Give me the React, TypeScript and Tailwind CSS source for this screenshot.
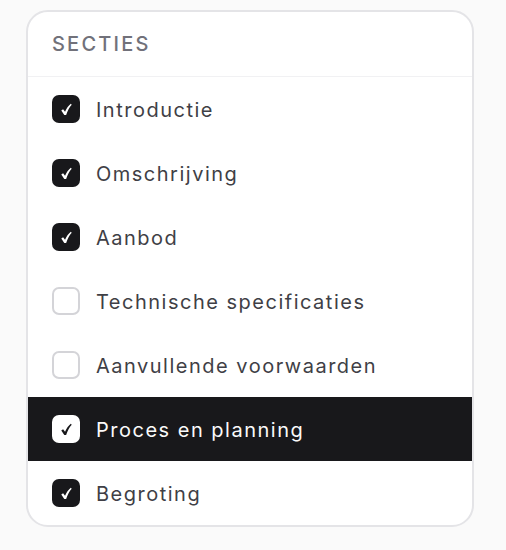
import React from "react";

const items: { label: string; checked: boolean; active?: boolean }[] = [
  { label: "Introductie", checked: true },
  { label: "Omschrijving", checked: true },
  { label: "Aanbod", checked: true },
  { label: "Technische specificaties", checked: false },
  { label: "Aanvullende voorwaarden", checked: false },
  { label: "Proces en planning", checked: true, active: true },
  { label: "Begroting", checked: true },
];

function Check() {
  return (
    <svg width="11" height="13" viewBox="0 0 12 13" fill="currentColor" aria-hidden>
      <path d="M0.3 7.6 L2.3 6.2 L4.4 9.0 C5.9 5.6 7.9 2.6 10.7 0.3 L11.7 1.3 C9.1 4.1 7.2 7.7 5.6 12.6 L3.6 12.6 Z" />
    </svg>
  );
}

export default function App() {
  return (
    <div
      className="min-h-[550px] w-[506px] bg-[#fafafa] pt-[10px] pl-[26px]"
      style={{ fontFamily: "Inter, 'Noto Sans', sans-serif" }}
    >
      <div className="w-[448px] overflow-hidden rounded-[22px] border-2 border-[#e4e4e7] bg-white">
        <div className="flex h-[65px] items-center border-b border-[#f1f1f3] px-6 text-[20px] font-medium tracking-[0.11em] text-[#71717a]">
          SECTIES
        </div>
        <div className="flex flex-col">
          {items.map((it) => (
            <div
              key={it.label}
              className={
                "flex h-[64px] items-center gap-4 px-6 " +
                (it.active ? "bg-[#18181b] text-[#fafafa]" : "text-[#3f3f46]")
              }
            >
              <div
                className={
                  "flex h-[28px] w-[28px] items-center justify-center rounded-[7px] " +
                  (it.checked
                    ? it.active
                      ? "bg-white text-[#18181b]"
                      : "bg-[#18181b] text-white"
                    : "border-2 border-[#d4d4d8] bg-white")
                }
              >
                {it.checked ? <Check /> : null}
              </div>
              <span className="pt-[2px] text-[20px] leading-none tracking-[0.075em]">{it.label}</span>
            </div>
          ))}
        </div>
      </div>
    </div>
  );
}
